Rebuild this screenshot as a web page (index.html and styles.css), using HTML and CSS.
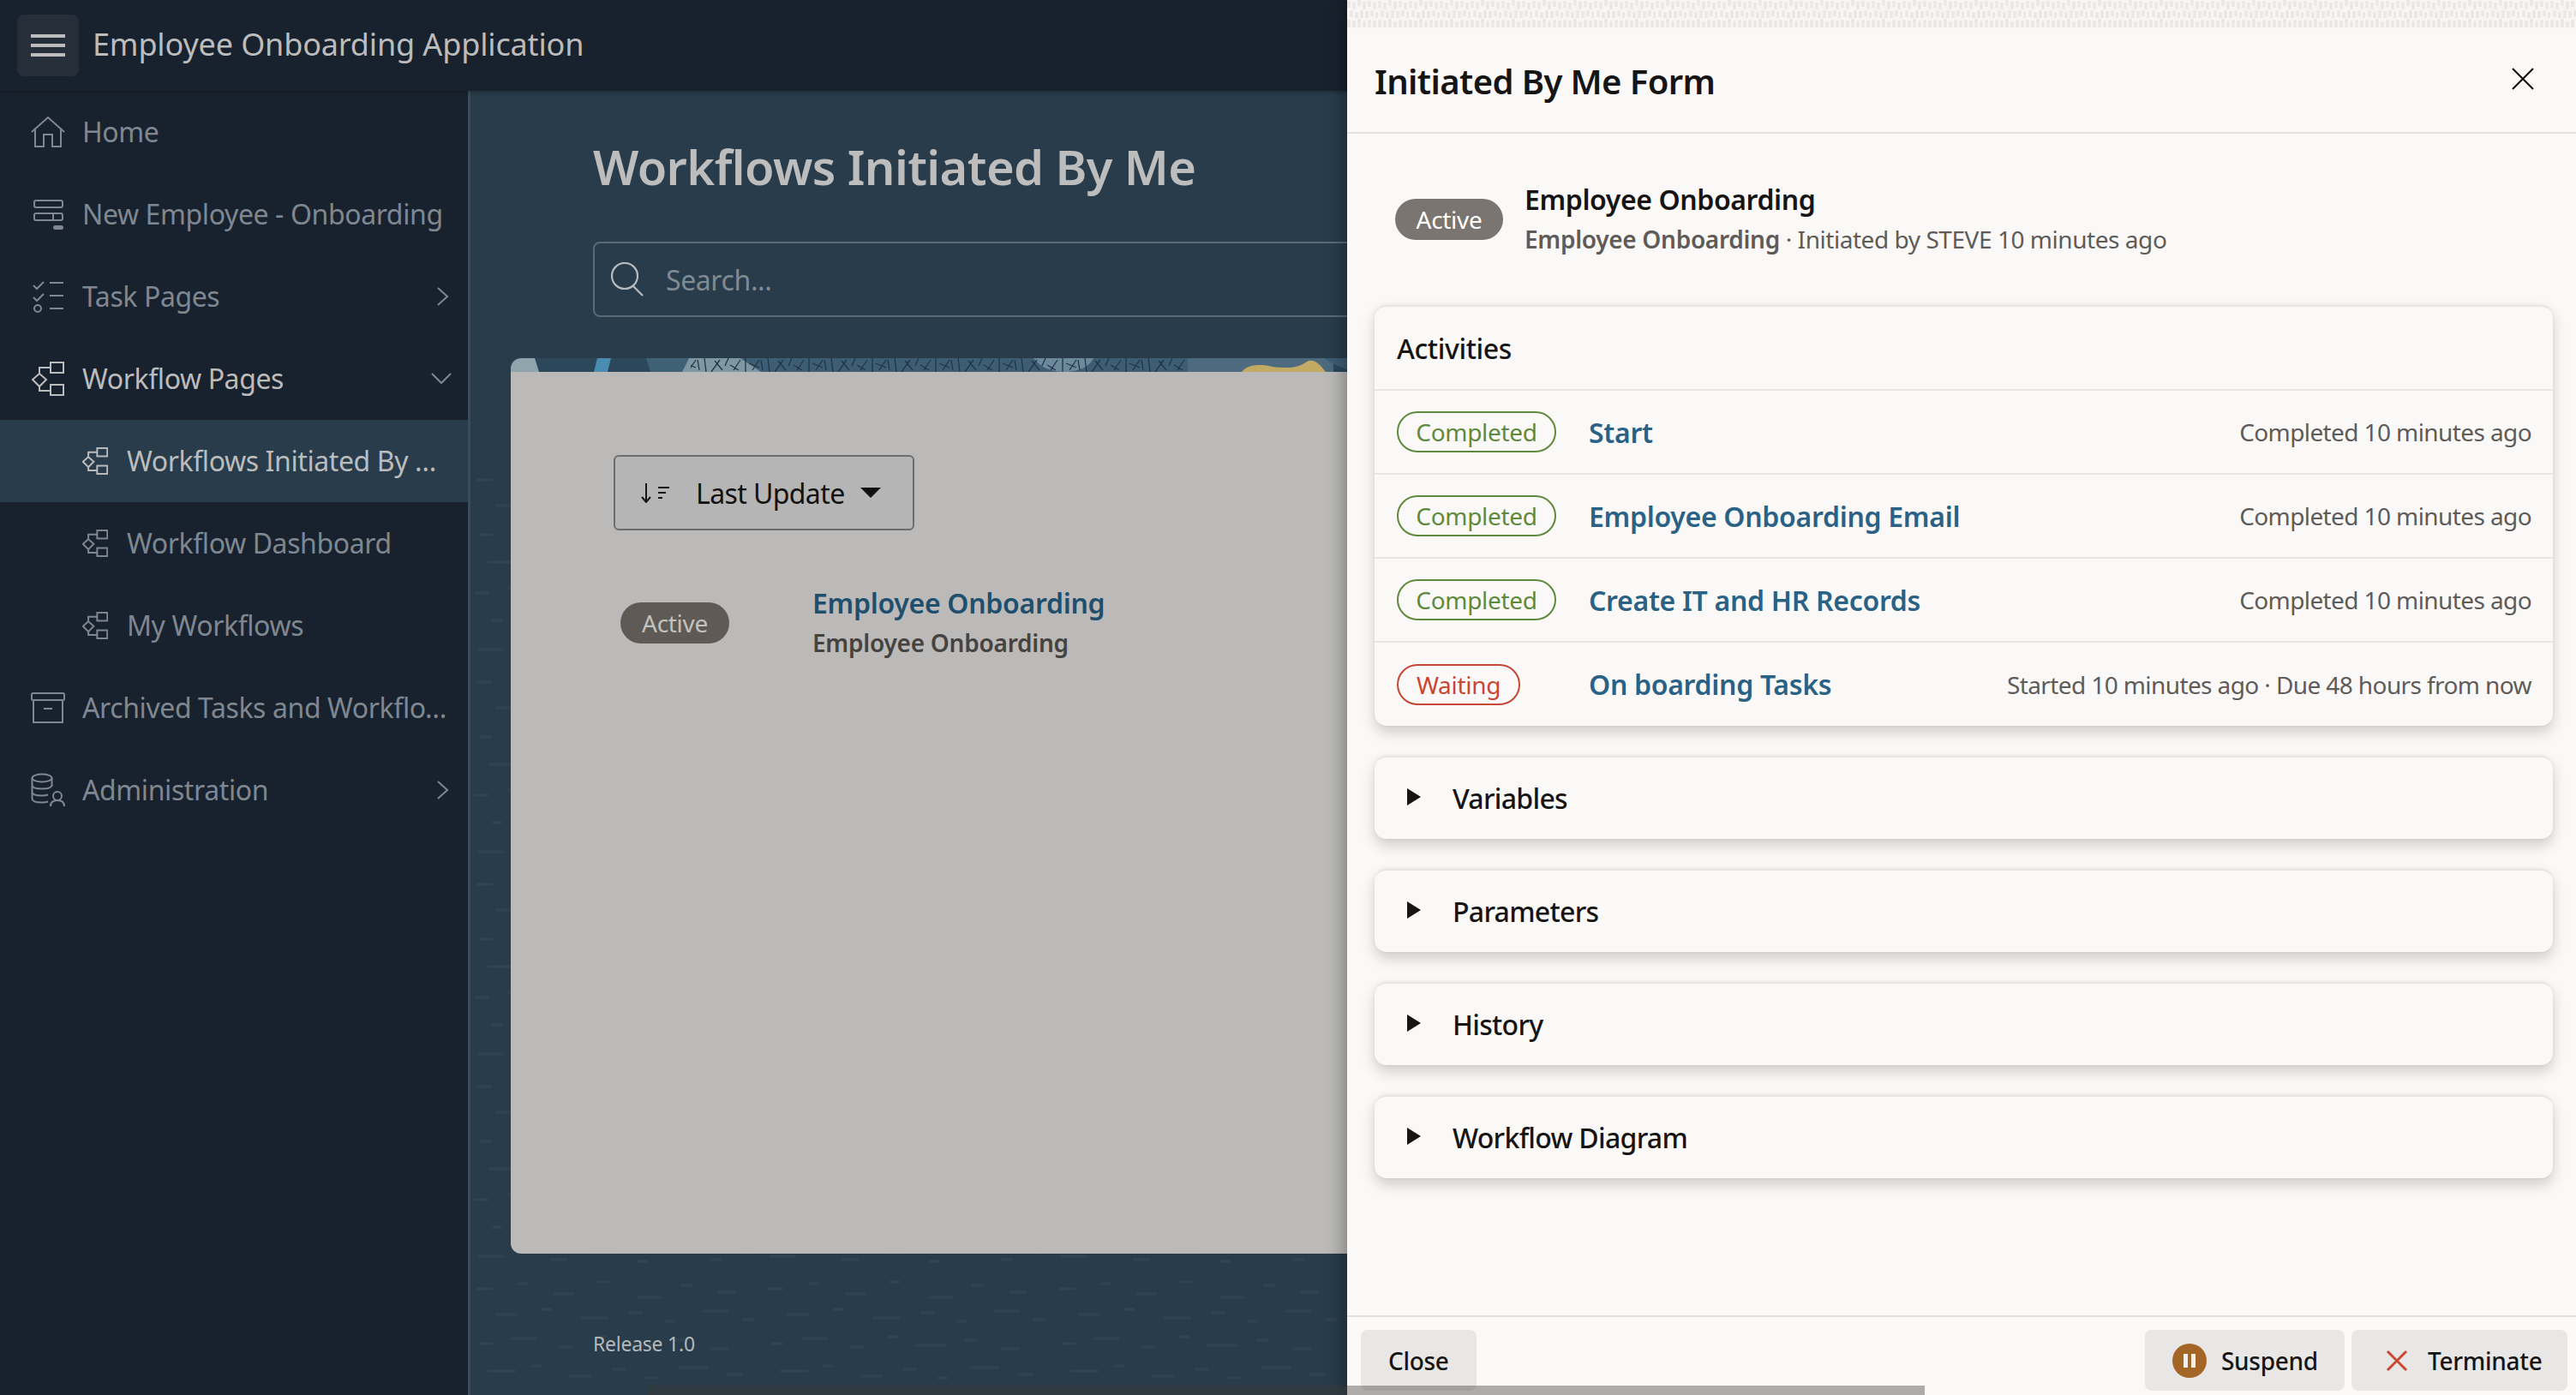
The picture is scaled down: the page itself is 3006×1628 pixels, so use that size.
FILE: index.html
```html
<!DOCTYPE html>
<html lang="en">
<head>
<meta charset="utf-8">
<title>Employee Onboarding Application</title>
<link rel="stylesheet" href="styles.css">
</head>
<body>
<svg class="defs" width="0" height="0" aria-hidden="true">
  <defs>
    <symbol id="i-home" viewBox="0 0 40 36"><path d="M1 18 20 1l19 17M5 15v20h10V21h10v14h10V15"/></symbol>
    <symbol id="i-form" viewBox="0 0 36 36"><rect x="2" y="2" width="33" height="8" rx="2"/><rect x="2" y="17" width="33" height="8" rx="2"/><path d="M24 17v8"/><rect class="solid" x="24" y="31" width="12" height="5" rx="2.5"/></symbol>
    <symbol id="i-tasks" viewBox="0 0 36 38"><path d="m1 6 4 4 8-8M1 20l4 4 8-8M20 3h16M20 18h16M20 33h16"/><circle cx="6" cy="33" r="4"/></symbol>
    <symbol id="i-flow" viewBox="0 0 38 40"><rect x="22" y="1" width="15" height="12"/><rect x="22" y="27" width="15" height="12"/><path d="M9 14 1 21l8 8 8-8ZM9 14V7h13M9 29v5h13"/></symbol>
    <symbol id="i-archive" viewBox="0 0 40 36"><rect x="1" y="1" width="38" height="8" rx="1.5"/><path d="M3 9v26h34V9M15 19h10"/></symbol>
    <symbol id="i-admin" viewBox="0 0 40 40"><ellipse cx="13" cy="6" rx="11.500" ry="4.500"/><path d="M1.500 6v24c0 3 5 4.500 11.500 4.500 3 0 5-.3 7-1M1.500 14c0 3 5 4.500 11.500 4.500S24.500 17 24.500 14M1.500 22c0 3 5 4.500 11.500 4.500 3 0 5-.3 7-1M24.500 6v10"/><circle cx="31" cy="27" r="5"/><path d="M23 39c0-5 3-7 8-7s8 2 8 7"/></symbol>
    <symbol id="i-right" viewBox="0 0 14 22"><path d="m1 1 11 10L1 21"/></symbol>
    <symbol id="i-down" viewBox="0 0 24 14"><path d="m1 1 11 11L23 1"/></symbol>
    <pattern id="p-dash" width="340" height="236" patternUnits="userSpaceOnUse">
      <g class="dash">
        <path d="M8 14h16M56 8h9M98 20h22M150 6h10M196 24h26M246 10h12M290 18h18M30 44h24M84 38h10M130 48h30M186 42h14M228 52h10M272 40h28M318 50h12M12 78h12M48 72h28M104 82h14M148 70h10M180 80h34M238 74h12M280 84h20M22 110h30M72 104h10M116 116h24M166 108h14M206 118h10M244 106h32M300 114h16M6 146h14M44 140h18M90 150h34M146 142h10M182 152h22M230 140h12M266 150h30M318 144h12M26 178h10M64 172h30M116 184h12M152 174h24M200 182h12M240 172h20M284 184h26M10 212h28M60 206h10M94 216h18M138 208h34M196 218h10M232 206h24M280 216h12M316 208h14"/>
      </g>
    </pattern>
    <pattern id="p-weave" width="36" height="33" patternUnits="userSpaceOnUse">
      <path class="weave" d="M2 1v8M8 3v8M14 0v7M20 2v9M26 1v7M32 3v8M5 12v8M11 14v7M17 12v9M23 13v8M29 12v7M35 14v7M2 23v9M8 24v8M14 22v10M20 25v7M26 23v9M32 24v8"/>
    </pattern>
    <pattern id="p-hatch" width="74" height="16" patternUnits="userSpaceOnUse">
      <path class="hatch" d="M4 0l2 16M12 16 22 2M16 3l9 11M32 0l-4 9M34 8l10 6M38 14l8-12M52 0v16M56 6l12 5M60 14l8-12M70 2l2 12"/>
    </pattern>
  </defs>
</svg>

<div class="app">
  <header class="topbar">
    <button class="burger" type="button" aria-label="Menu"><span></span><span></span><span></span></button>
    <span class="app-name">Employee Onboarding Application</span>
  </header>

  <div class="workspace">
    <nav class="sidenav">
      <a class="nav-item"><svg class="nav-icon"><use href="#i-home"/></svg><span class="nav-label">Home</span></a>
      <a class="nav-item"><svg class="nav-icon form"><use href="#i-form"/></svg><span class="nav-label">New Employee - Onboarding</span></a>
      <a class="nav-item"><svg class="nav-icon form"><use href="#i-tasks"/></svg><span class="nav-label">Task Pages</span><svg class="chev-right"><use href="#i-right"/></svg></a>
      <a class="nav-item open"><svg class="nav-icon"><use href="#i-flow"/></svg><span class="nav-label">Workflow Pages</span><svg class="chev-down"><use href="#i-down"/></svg></a>
      <a class="nav-item sub current"><svg class="sub-icon"><use href="#i-flow"/></svg><span class="nav-label">Workflows Initiated By Me</span></a>
      <a class="nav-item sub"><svg class="sub-icon"><use href="#i-flow"/></svg><span class="nav-label">Workflow Dashboard</span></a>
      <a class="nav-item sub"><svg class="sub-icon"><use href="#i-flow"/></svg><span class="nav-label">My Workflows</span></a>
      <a class="nav-item"><svg class="nav-icon"><use href="#i-archive"/></svg><span class="nav-label">Archived Tasks and Workflows</span></a>
      <a class="nav-item"><svg class="nav-icon"><use href="#i-admin"/></svg><span class="nav-label">Administration</span><svg class="chev-right"><use href="#i-right"/></svg></a>
    </nav>

    <main class="content">
      <svg class="texture" aria-hidden="true"><rect width="100%" height="100%" fill="url(#p-dash)"/></svg>
      <div class="content-head">
        <h1 class="page-title">Workflows Initiated By Me</h1>
        <div class="search">
          <svg class="search-icon" viewBox="0 0 40 40"><circle cx="17" cy="16" r="15"/><path d="m27 28 11 11"/></svg>
          <span class="search-text">Search...</span>
        </div>
      </div>
      <section class="result-card">
        <svg class="card-art" viewBox="0 0 1500 16" aria-hidden="true">
          <rect width="1500" height="16" fill="#2c4759"/>
          <path d="M0 0h28l5 16H0Z" fill="#8fa5ae"/>
          <path d="M101 0h16l-4 16H97Z" fill="#4a8db0"/>
          <path d="M158 0h50l-8 16h-37Z" fill="#3f6176"/>
          <path d="M208 0h600v16H200Z" fill="#3c5d74"/>
          <path d="M208 0h60l24 16h-92Z" fill="#7f97a3"/>
          <path d="M240 0h400q-4 16-60 16h-80q-40 0-60 0H240Z" fill="none"/>
          <path d="M610 0h70q-8 16-34 16-24 0-36-16Z" fill="#6d8a9c"/>
          <rect x="210" y="0" width="580" height="16" fill="url(#p-hatch)"/>
          <path d="M790 0h170v16H790Z" fill="#4d6a7e"/>
          <path d="M853 16c6-8 20-10 36-6 16 2 30 2 40-6 8-4 14 2 22 12Z" fill="#c2a964"/>
          <path d="M950 0h40v16c-16-2-30-8-40-16Z" fill="#3c5d74"/>
        </svg>
        <div class="card-body">
          <button class="sort" type="button">
            <svg class="sort-icon" viewBox="0 0 34 24"><path d="M6 1v22M1 17l5 6 5-6M20 6h13M20 12h9M20 18h5"/></svg>
            <span class="sort-text">Last Update</span>
            <span class="caret"></span>
          </button>
          <div class="result-row">
            <span class="pill pill-dim">Active</span>
            <div class="result-text">
              <a class="result-title">Employee Onboarding</a>
              <span class="result-sub">Employee Onboarding</span>
            </div>
          </div>
        </div>
      </section>
      <footer class="release">Release 1.0</footer>
    </main>
  </div>
</div>

<aside class="drawer">
  <svg class="drawer-strip" aria-hidden="true"><rect width="100%" height="100%" fill="url(#p-weave)"/></svg>
  <div class="drawer-head">
    <h2 class="drawer-title">Initiated By Me Form</h2>
    <svg class="close-x" viewBox="0 0 26 26"><path d="m1 1 24 24M25 1 1 25"/></svg>
  </div>
  <div class="drawer-body">
    <div class="summary">
      <span class="pill pill-solid">Active</span>
      <div class="summary-text">
        <strong class="summary-title">Employee Onboarding</strong>
        <span class="summary-sub"><b>Employee Onboarding</b> · Initiated by STEVE 10 minutes ago</span>
      </div>
    </div>

    <section class="panel">
      <h3 class="panel-title">Activities</h3>
      <div class="activity">
        <span class="pill pill-green">Completed</span>
        <a class="activity-link">Start</a>
        <span class="activity-meta">Completed 10 minutes ago</span>
      </div>
      <div class="activity">
        <span class="pill pill-green">Completed</span>
        <a class="activity-link">Employee Onboarding Email</a>
        <span class="activity-meta">Completed 10 minutes ago</span>
      </div>
      <div class="activity">
        <span class="pill pill-green">Completed</span>
        <a class="activity-link">Create IT and HR Records</a>
        <span class="activity-meta">Completed 10 minutes ago</span>
      </div>
      <div class="activity">
        <span class="pill pill-red">Waiting</span>
        <a class="activity-link">On boarding Tasks</a>
        <span class="activity-meta">Started 10 minutes ago · Due 48 hours from now</span>
      </div>
    </section>

    <section class="panel collapsed"><span class="tri"></span><span class="collapsed-title">Variables</span></section>
    <section class="panel collapsed"><span class="tri"></span><span class="collapsed-title">Parameters</span></section>
    <section class="panel collapsed"><span class="tri"></span><span class="collapsed-title">History</span></section>
    <section class="panel collapsed"><span class="tri"></span><span class="collapsed-title">Workflow Diagram</span></section>
  </div>
  <div class="drawer-foot">
    <button class="btn" type="button">Close</button>
    <span class="foot-spacer"></span>
    <button class="btn btn-suspend" type="button">
      <svg class="pause" viewBox="0 0 40 40"><circle cx="20" cy="20" r="20"/><path d="M13 12h5v16h-5ZM22 12h5v16h-5Z"/></svg>Suspend
    </button>
    <button class="btn btn-terminate" type="button">
      <svg class="term-x" viewBox="0 0 26 26"><path d="m2 2 22 22M24 2 2 24"/></svg>Terminate
    </button>
  </div>
</aside>
<div class="page-scroll"></div>
</body>
</html>
```

FILE: styles.css
```css
* { box-sizing: border-box; }
html, body { margin: 0; height: 100%; overflow: hidden; }
body { font-family: "Noto Sans", "Open Sans", sans-serif; background: #18222e; color: #161513; position: relative; }
h1, h2, h3 { margin: 0; }
a { text-decoration: none; }
button { font-family: inherit; }
.defs { position: absolute; }
.dash path { stroke: rgba(255,255,255,.035); stroke-width: 3; stroke-linecap: round; fill: none; }
.weave { stroke: #e9e8e6; stroke-width: 3.500; fill: none; }
.hatch { stroke: #1f3445; stroke-width: 1.300; fill: none; }

.app { display: grid; grid-template-rows: 106px 1fr; height: 100vh; }

.topbar { display: flex; align-items: center; padding-left: 20px; background: #18222e; box-shadow: 0 2px 4px rgba(0,0,0,.25); position: relative; z-index: 2; }
.burger { width: 72px; height: 72px; border: 0; border-radius: 8px; background: #252e39; display: flex; flex-direction: column; justify-content: center; align-items: center; gap: 7px; padding: 0; }
.burger span { display: block; width: 40px; height: 4px; background: #bcbcbc; }
.app-name { margin: -3px 0 0 16px; font-size: 36px; color: #bcbcbc; letter-spacing: -.15px; white-space: nowrap; }

.workspace { display: flex; min-height: 0; }
.sidenav { flex: 0 0 549px; background: #18222e; border-right: 3px solid #3a4d5a; display: flex; flex-direction: column; }
.nav-item { flex: 0 0 96px; display: flex; align-items: center; padding-left: 36px; color: #7f8790; font-size: 32px; letter-spacing: -.4px; position: relative; }
.nav-item.sub { padding-left: 96px; }
.nav-item.open { color: #bcbcbc; }
.nav-item.current { background: #283c4b; color: #bcbcbc; }
.nav-label { margin: -2px 0 0 20px; white-space: nowrap; overflow: hidden; text-overflow: ellipsis; max-width: 430px; }
.sub .nav-label { margin-left: 22px; max-width: 376px; }
.nav-icon { width: 40px; height: 40px; flex: none; fill: none; stroke: #7f8790; stroke-width: 2; }
.nav-icon.form { width: 36px; height: 38px; margin: 0 2px; }
.nav-item.open .nav-icon { stroke: #bcbcbc; }
.sub-icon { width: 30px; height: 32px; flex: none; fill: none; stroke: #7f8790; stroke-width: 2.500; }
.current .sub-icon { stroke: #bcbcbc; }
.solid { fill: #7f8790; stroke: none; }
.chev-right, .chev-down { position: absolute; fill: none; stroke: #7f8790; stroke-width: 2; }
.chev-right { right: 22px; width: 14px; height: 22px; }
.chev-down { right: 19px; width: 24px; height: 14px; }

.content { flex: 1; min-width: 0; position: relative; overflow: hidden; background: #283c4b; display: flex; flex-direction: column; padding-left: 47px; }
.texture { position: absolute; left: 0; right: 0; top: 440px; width: 100%; height: 1082px; }
.content-head { padding: 56px 0 0 96px; position: relative; height: 312px; }
.page-title { font-size: 56px; font-weight: 600; line-height: 64px; color: #bdbdbd; letter-spacing: -.6px; }
.search { margin-top: 56px; width: 1400px; height: 88px; border: 2px solid #5a6a76; border-radius: 8px; display: flex; align-items: center; padding-left: 18px; }
.search-icon { width: 40px; height: 40px; fill: none; stroke: #b8bcbf; stroke-width: 2.200; flex: none; }
.search-text { margin-left: 25px; font-size: 32px; color: #7f8b94; letter-spacing: -.4px; }

.result-card { position: relative; width: 1500px; flex: 0 0 1045px; border-radius: 12px; overflow: hidden; display: flex; flex-direction: column; }
.card-art { display: block; width: 1500px; height: 16px; flex: none; }
.card-body { flex: 1; background: #bbbab8; padding: 97px 0 0 120px; }
.sort { display: flex; align-items: center; width: 351px; height: 88px; padding: 0 0 0 30px; background: #b5b5b6; border: 2px solid #6d6d6d; border-radius: 6px; color: #111; }
.sort-icon { width: 34px; height: 24px; fill: none; stroke: #161513; stroke-width: 2; flex: none; }
.sort-text { margin-left: 30px; font-size: 32px; letter-spacing: -.6px; }
.caret { margin-left: 18px; width: 0; height: 0; border-left: 12px solid transparent; border-right: 12px solid transparent; border-top: 12px solid #111; }

.result-row { display: flex; align-items: center; margin: 62px 0 0 8px; }
.pill { display: inline-flex; align-items: center; justify-content: center; border-radius: 24px; height: 48px; font-size: 28px; letter-spacing: -.3px; flex: none; white-space: nowrap; }
.pill-dim { width: 127px; background: #5f5a56; color: #c5c2be; }
.result-text { margin-left: 97px; display: flex; flex-direction: column; }
.result-title { font-size: 32px; font-weight: 600; color: #204f6e; line-height: 46px; letter-spacing: -.3px; }
.result-sub { font-size: 28px; font-weight: 600; color: #454340; line-height: 46px; letter-spacing: -.25px; }
.release { position: relative; margin: 89px 0 0 96px; font-size: 23px; letter-spacing: -.25px; color: #b5b9bc; }

.drawer { position: absolute; top: 0; right: 0; bottom: 0; width: 1434px; background: #fbf9f8; display: flex; flex-direction: column; box-shadow: -6px 0 18px rgba(0,0,0,.28); z-index: 3; }
.drawer-strip { display: block; width: 100%; height: 33px; flex: none; background: #f7f6f4; }
.drawer-head { height: 123px; flex: none; border-bottom: 2px solid #e4e2df; display: flex; align-items: center; justify-content: space-between; padding: 0 49px 0 32px; }
.drawer-title { font-size: 40px; font-weight: 600; line-height: 1; letter-spacing: -.6px; margin-top: 2px; }
.close-x { width: 26px; height: 26px; stroke: #161513; stroke-width: 2.200; fill: none; margin-top: -4px; }
.drawer-body { flex: 1; min-height: 0; padding: 0 27px 0 32px; display: flex; flex-direction: column; }
.summary { display: flex; align-items: center; height: 200px; padding: 0 0 0 24px; flex: none; }
.pill-solid { width: 126px; background: #7a7570; color: #fff; }
.summary-text { margin-left: 25px; display: flex; flex-direction: column; }
.summary-title { font-size: 32px; font-weight: 600; line-height: 46px; letter-spacing: -.4px; }
.summary-sub { font-size: 28px; color: #5e5b58; line-height: 46px; letter-spacing: -.45px; }
.summary-sub b { font-weight: 600; letter-spacing: -.3px; }

.panel { flex: none; background: #fbf9f8; border: 2px solid #e8e6e3; border-width: 2px 0 0; border-radius: 14px; box-shadow: 0 8px 16px rgba(0,0,0,.17), 0 0 4px rgba(0,0,0,.06); }
.panel-title { height: 98px; display: flex; align-items: center; padding-left: 26px; font-size: 32px; font-weight: 500; letter-spacing: -.4px; border-bottom: 2px solid #e8e6e3; }
.activity { height: 98px; display: flex; align-items: center; padding: 0 25px 0 26px; border-bottom: 2px solid #e8e6e3; }
.activity:last-child { border-bottom: 0; height: 97px; }
.pill-green { width: 186px; border: 2px solid #5f8a3d; color: #5f8a3d; }
.pill-red { width: 144px; border: 2px solid #c74634; color: #c74634; }
.activity-link { position: absolute; margin-left: 224px; font-size: 32px; font-weight: 600; letter-spacing: -.3px; color: #2a6285; }
.activity-meta { margin-left: auto; font-size: 28px; letter-spacing: -.6px; color: #5e5b58; white-space: nowrap; }
.collapsed { margin-top: 35px; height: 97px; display: flex; align-items: center; padding-left: 38px; }
.tri { width: 0; height: 0; border-top: 10px solid transparent; border-bottom: 10px solid transparent; border-left: 16px solid #161513; margin-top: -4px; }
.collapsed-title { margin-left: 37px; font-size: 32px; font-weight: 500; letter-spacing: -.7px; }

.drawer-foot { height: 93px; flex: none; border-top: 2px solid #e4e2df; display: flex; align-items: flex-start; padding: 15px 10px 0 16px; gap: 8px; }
.btn { height: 71px; border: 0; border-radius: 8px; background: #e8e7e5; font-size: 28px; font-weight: 500; letter-spacing: -.3px; color: #161513; display: flex; align-items: center; padding: 0 32px; }
.foot-spacer { flex: 1; }
.btn-suspend { width: 233px; }
.btn-terminate { width: 252px; }
.pause { width: 40px; height: 40px; margin-right: 17px; flex: none; }
.pause circle { fill: #a46626; }
.pause path { fill: #f3efe9; }
.term-x { width: 26px; height: 26px; margin: 0 23px 0 8px; stroke: #c74634; stroke-width: 3; fill: none; flex: none; }

.page-scroll { position: absolute; left: 755px; bottom: 0; width: 1491px; height: 11px; background: rgba(60,55,50,.4); z-index: 4; }
```
